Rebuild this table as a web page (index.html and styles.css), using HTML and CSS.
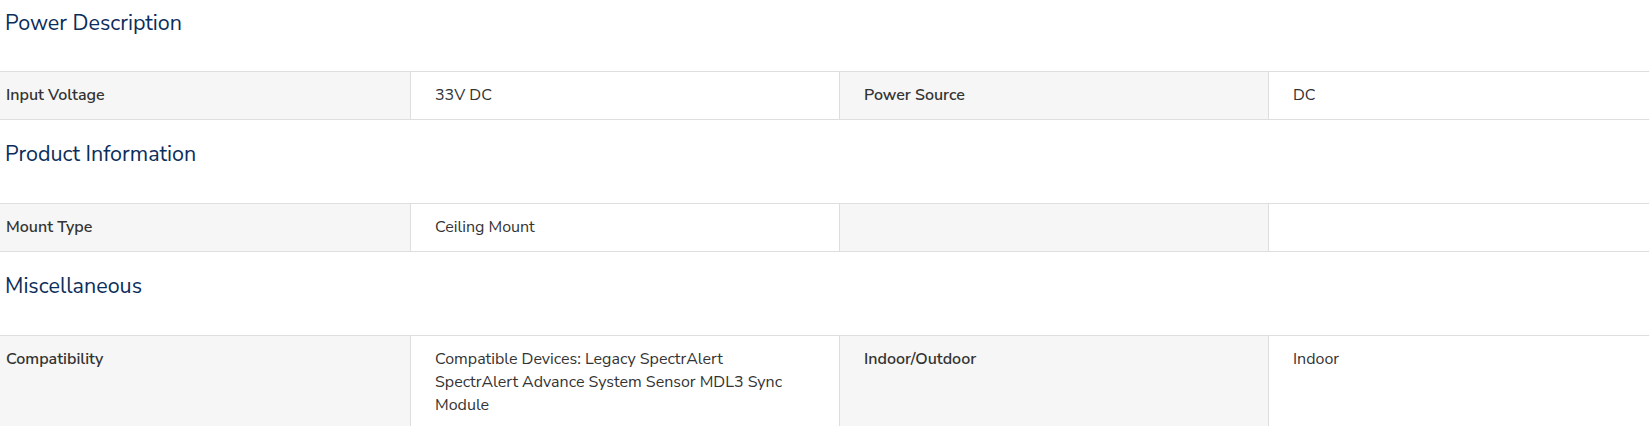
FILE: index.html
```html
<!DOCTYPE html>
<html lang="en">
<head>
<meta charset="utf-8">
<title>Specifications</title>
<link rel="stylesheet" href="styles.css">
</head>
<body>
<div class="specs">
  <h3 class="section-title first">Power Description</h3>
  <div class="spec-row">
    <div class="cell label">Input Voltage</div>
    <div class="cell value">33V DC</div>
    <div class="cell label">Power Source</div>
    <div class="cell value">DC</div>
  </div>

  <h3 class="section-title">Product Information</h3>
  <div class="spec-row">
    <div class="cell label">Mount Type</div>
    <div class="cell value">Ceiling Mount</div>
    <div class="cell label"></div>
    <div class="cell value"></div>
  </div>

  <h3 class="section-title">Miscellaneous</h3>
  <div class="spec-row">
    <div class="cell label">Compatibility</div>
    <div class="cell value">Compatible Devices: Legacy SpectrAlert<br>SpectrAlert Advance System Sensor MDL3 Sync Module</div>
    <div class="cell label">Indoor/Outdoor</div>
    <div class="cell value">Indoor</div>
  </div>
</div>
</body>
</html>
```

FILE: styles.css
```css
html, body {
  margin: 0;
  padding: 0;
  background: #ffffff;
}

body {
  font-family: "Nunito Sans", Lato, "Open Sans", sans-serif;
  color: #333333;
  overflow: hidden;
}

.specs {
  display: flex;
  flex-direction: column;
}

.section-title {
  margin: 19px 0 34px;
  padding-left: 5px;
  font-size: 21.5px;
  line-height: 30px;
  font-weight: 400;
  color: #0b2d5b;
}

.section-title.first {
  margin-top: 8px;
  margin-bottom: 33px;
}

.spec-row {
  display: grid;
  grid-template-columns: 410px 429px 429px 1fr;
  border-top: 1px solid #dedede;
  border-bottom: 1px solid #dedede;
}

.cell {
  padding: 12px 24px;
  font-size: 16px;
  line-height: 23px;
  min-height: 23px;
  border-left: 1px solid #dedede;
}

.cell:first-child {
  border-left: none;
  padding-left: 6px;
}

.label {
  background: #f6f6f6;
  font-weight: 600;
  color: #333333;
}

.value {
  background: #ffffff;
  font-weight: 400;
  color: #333333;
}
```
